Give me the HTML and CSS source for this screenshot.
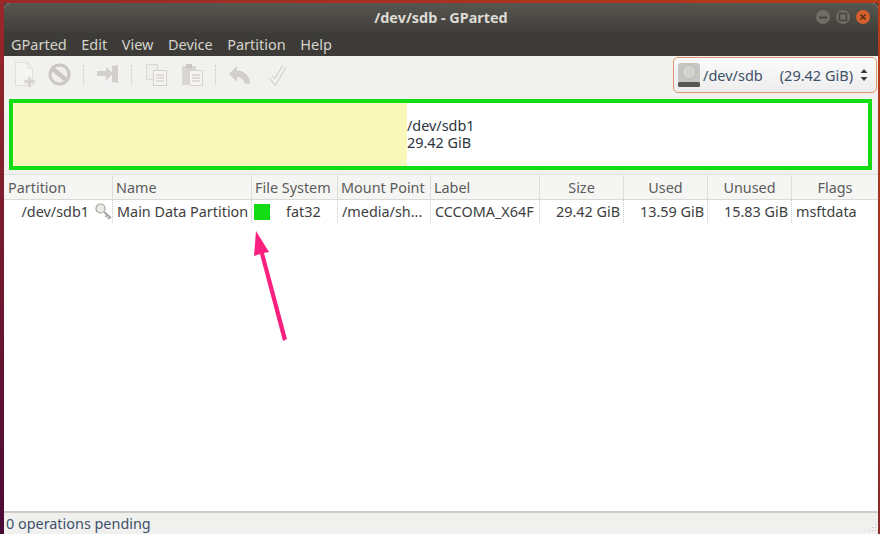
FILE: index.html
```html
<!DOCTYPE html>
<html>
<head>
<meta charset="utf-8">
<title>/dev/sdb - GParted</title>
<link rel="stylesheet" href="styles.css">
</head>
<body>
<div class="window">
  <header class="titlebar">
    <span class="title">/dev/sdb - GParted</span>
    <div class="controls">
      <span class="ctl"><svg width="14" height="14" viewBox="0 0 14 14"><path d="M3 7.500h8" stroke="#45443f" stroke-width="2"/></svg></span>
      <span class="ctl"><svg width="14" height="14" viewBox="0 0 14 14"><rect x="3.500" y="3.500" width="7" height="7" fill="none" stroke="#45443f" stroke-width="1.500"/></svg></span>
      <span class="ctl close"><svg width="14" height="14" viewBox="0 0 14 14"><path d="M4.500 4.500l5 5M9.500 4.500l-5 5" stroke="#5a2c14" stroke-width="1.600"/></svg></span>
    </div>
  </header>
  <nav class="menubar">
    <span>GParted</span><span>Edit</span><span>View</span><span>Device</span><span>Partition</span><span>Help</span>
  </nav>
  <div class="toolbar">
    <div class="tools">
      <svg class="tool" width="23" height="26" viewBox="0 0 23 26"><path d="M1.500 .500h12l5 5v18h-17z" fill="#f5f5f3" stroke="#dededa"/><path d="M13.500 1v5h5" fill="none" stroke="#dededa"/><path d="M14 15h3v3h4v3h-4v4h-3v-4h-4v-3h4z" fill="#d6d3cf" stroke="#e8e6e2" stroke-width=".6"/></svg>
      <svg class="tool gap2" width="23" height="23" viewBox="0 0 23 23"><circle cx="11.500" cy="11.500" r="9.500" fill="#f0efed" stroke="#cbc7c3" stroke-width="3"/><path d="M5 6l13 11" stroke="#cbc7c3" stroke-width="4.500"/></svg>
      <i class="sep s1"></i>
      <svg class="tool arrowicon" width="22" height="19" viewBox="0 0 22 19"><path d="M0 6h9V2l7 6.500-7 7V11H0z" fill="#d3d0cc"/><path d="M15 1l6-1v18l-6-1z" fill="#d3d0cc"/></svg>
      <i class="sep s2"></i>
      <svg class="tool" width="21" height="22" viewBox="0 0 21 22"><path d="M.500 .500h11v15H.500z" fill="#efeeec" stroke="#dad8d4"/><path d="M7.500 6.500h13v15h-13z" fill="#f5f4f2" stroke="#d4d1cd"/><path d="M10 11h8M10 14h8M10 17h8" stroke="#c4c1bd"/></svg>
      <svg class="tool gap3" width="21" height="22" viewBox="0 0 21 22"><path d="M0 2h14v19H0z" fill="#d9d6d2"/><path d="M4 0h6v4H4z" fill="#cbc7c3"/><path d="M7.500 6.500h13v15h-13z" fill="#f5f4f2" stroke="#d4d1cd"/><path d="M10 11h8M10 14h8M10 17h8" stroke="#c4c1bd"/></svg>
      <i class="sep s3"></i>
      <svg class="tool" width="22" height="18" viewBox="0 0 22 18"><path d="M0 8l8-8v4.500c7 0 12 4 13.500 13H16c-2-5-5-6.500-8-6.500V16z" fill="#d3d0cc"/></svg>
      <svg class="tool gap4" width="19" height="22" viewBox="0 0 19 22"><path d="M3 13l4 5L16 3" fill="none" stroke="#d3d1cc" stroke-width="5"/><path d="M3 13l4 5L16 3" fill="none" stroke="#f3f3f1" stroke-width="2.500"/></svg>
    </div>
    <div class="devpick">
      <svg width="24" height="26" viewBox="0 0 24 26"><rect x="1" y="1" width="22" height="24" rx="3" fill="#c6c6c2"/><rect x="1" y="20" width="22" height="5" rx="1.500" fill="#5a5854"/><circle cx="12" cy="10" r="7" fill="#d2d2ce" stroke="#b6b6b2"/></svg>
      <span class="devname">/dev/sdb</span>
      <span class="devsize">(29.42 GiB)</span>
      <svg class="updown" width="8" height="16" viewBox="0 0 8 16"><path d="M4 2l3.500 4H.500zM4 14L.500 10h7z" fill="#3d3d3d"/></svg>
    </div>
  </div>
  <section class="graph">
    <div class="frame">
      <div class="usedbar"></div>
      <div class="graphlabel">/dev/sdb1<br>29.42 GiB</div>
    </div>
  </section>
  <main class="list">
    <div class="row head">
      <span>Partition</span><span>Name</span><span>File System</span><span>Mount Point</span><span>Label</span><span class="c">Size</span><span class="c">Used</span><span class="c">Unused</span><span class="c">Flags</span>
    </div>
    <div class="row body">
      <span class="part">/dev/sdb1<svg width="17" height="17" viewBox="0 0 17 17"><circle cx="5.500" cy="5.500" r="4.500" fill="#ecebe8" stroke="#a5a39f" stroke-width="1.200"/><path d="M9 9l7 6M12 12l-1.500 2M14.500 14l-1.500 2" stroke="#a5a39f" stroke-width="1.800" fill="none"/></svg></span>
      <span>Main Data Partition</span>
      <span class="fs"><i class="swatch"></i><b>fat32</b></span>
      <span>/media/sh...</span>
      <span>CCCOMA_X64F</span>
      <span class="r">29.42 GiB</span>
      <span class="r">13.59 GiB</span>
      <span class="r">15.83 GiB</span>
      <span>msftdata</span>
    </div>
  </main>
  <footer class="status">0 operations pending<svg class="grip" width="11" height="11" viewBox="0 0 11 11"><path d="M9 1h1v1H9zM9 4h1v1H9zM6 4h1v1H6zM9 7h1v1H9zM6 7h1v1H6zM3 7h1v1H3z" fill="#c4c2be"/></svg></footer>
</div>
<svg class="arrow" width="50" height="125" viewBox="0 0 50 125"><path d="M8 5L21 26 16 27 39 113 35 115 12 28 6 30z" fill="#f9207f"/></svg>
</body>
</html>
```
FILE: styles.css
```css
* { box-sizing: border-box; }
html, body { margin: 0; height: 100%; }
body {
  width: 880px; height: 534px; overflow: hidden; position: relative;
  padding: 3px 2px 0 4px;
  background:
    linear-gradient(#9a2828, #4a0a36) left / 4px 100% no-repeat,
    linear-gradient(#b83c18, #8a2a2a) right / 2px 100% no-repeat,
    linear-gradient(90deg, #9a2828, #b83c18) top / 100% 3px no-repeat,
    #3c3b37;
  font-family: "Noto Sans", sans-serif;
  font-size: 14.400px; color: #3d3d3d;
}
.window {
  height: 531px; display: flex; flex-direction: column;
  background: #fff; border-radius: 6px 6px 0 0; overflow: hidden;
}
.titlebar {
  height: 30px; flex: none; position: relative;
  display: flex; align-items: center; justify-content: center;
  padding-bottom: 2px;
  background: linear-gradient(#575650, #3f3e3a);
}
.title { color: #dedcd6; font-weight: 700; font-size: 14.400px; }
.controls { position: absolute; right: 8px; top: 7px; display: flex; gap: 6px; }
.ctl { width: 14px; height: 14px; border-radius: 50%; background: #6f6d66; display: block; }
.ctl svg { display: block; }
.ctl.close { background: #d5602c; }
.menubar {
  height: 23px; flex: none; display: flex; gap: 14.500px; align-items: center;
  padding: 0 0 2px 7px; background: #3c3b37; color: #d6d3cc; font-size: 14.500px;
}
.toolbar {
  height: 40px; flex: none; display: flex; justify-content: space-between; align-items: flex-start;
  background: #f1f1f0; padding: 0 1px 0 0;
}
.tools { display: flex; align-items: center; height: 37px; padding: 0 0 0 10px; }
.tool { flex: none; }
.gap2 { margin-left: 11px; }
.gap3 { margin-left: 15px; }
.gap4 { margin-left: 17px; }
.arrowicon { margin-left: 0; }
.sep { width: 0; height: 20px; border-left: 1px dotted #c8c8c6; }
.s1 { margin: 0 13px 0 12px; }
.s2 { margin: 0 14px 0 12px; }
.s3 { margin: 0 13px 0 12px; }
.devpick {
  width: 204px; height: 36px; margin-top: 1px; display: flex; align-items: center;
  border: 1px solid #dc9468; border-radius: 5px;
  background: linear-gradient(#fbfbfb, #ecedec); padding: 0 8px 0 3px; font-size: 14.500px; color: #3d5068;
}
.devname { margin-left: 2px; }
.devsize { margin-left: 17px; }
.updown { margin-left: auto; }
.graph { height: 78px; flex: none; background: #f1f1f0; padding: 3px 6px 4px 5px; }
.frame {
  height: 71px; border: 4px solid #14dc14; background: #fff; display: flex; align-items: center;
}
.usedbar { width: 394px; align-self: stretch; background: #f9f7ba; }
.graphlabel { font-size: 14.400px; line-height: 17px; color: #2b3440; margin-top: -2px; }
.list { flex: 1; background: #fff; min-height: 0; }
.row { display: grid; grid-template-columns: 109px 139px 86px 93px 109px 84px 84px 84px 1fr; }
.head { height: 26px; background: #f5f5f4; border-bottom: 1px solid #d9d9d6; border-top: 1px solid #e2e2e0; }
.head span { display: flex; align-items: center; padding-left: 3px; border-right: 1px solid #dddddb; color: #5c5c5a; white-space: nowrap; }
.head span:first-child { padding-left: 4px; }
.head span:last-child { border-right: 0; }
.head .c { justify-content: center; padding: 0; }
.body { height: 23px; }
.body span { display: flex; align-items: center; padding-left: 4px; border-right: 1px dotted #c8c8c6; white-space: nowrap; color: #404040; }
.body span:last-child { border-right: 0; }
.body .r { justify-content: flex-end; padding: 0 3px 0 0; }
.body .part { justify-content: flex-end; padding: 0; gap: 6px; }
.body .fs { padding-left: 2px; }
.swatch { width: 16px; height: 16px; background: #14dc14; display: block; }
.fs b { font-weight: 400; margin-left: 16px; }
.status {
  height: 23px; flex: none; background: #f0f0ef; border-top: 2px solid #cdccc8;
  display: flex; align-items: center; justify-content: space-between; padding: 0 1px 0 2px; color: #3d5068;
}
.grip { align-self: flex-end; }
.arrow { position: absolute; left: 248px; top: 226px; }
```
